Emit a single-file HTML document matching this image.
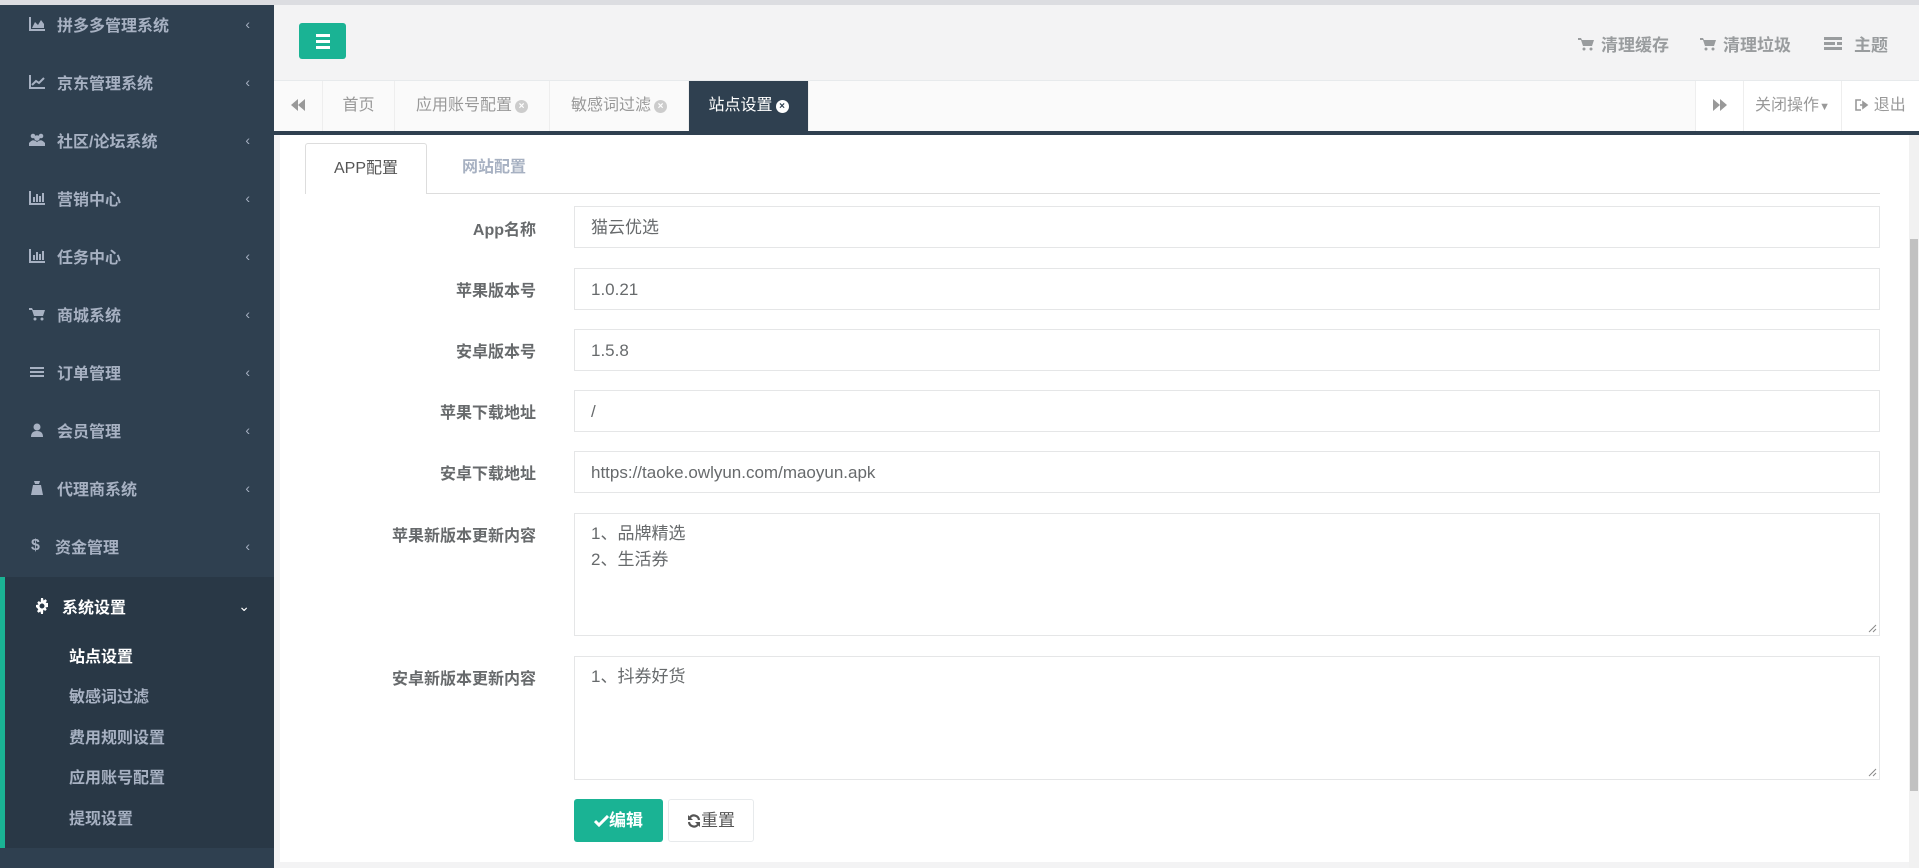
<!DOCTYPE html>
<html><head><meta charset="utf-8"><style>
*{box-sizing:border-box;margin:0;padding:0}
body{width:1919px;height:868px;overflow:hidden;background:#f3f3f4;font-family:"Liberation Sans","Noto Sans CJK SC",sans-serif;position:relative}
.top{position:absolute;left:0;top:0;width:1919px;height:5px;background:#dcdde1}
.side{position:absolute;left:0;top:5px;width:274px;height:863px;background:#2f4050}
.nav{position:absolute;left:0;width:274px;height:58px;color:#a7b1c2;font-size:16px;font-weight:bold;display:flex;align-items:center}
.nav svg{margin-left:29px;margin-right:12px;fill:#a7b1c2}
.nav .ar{position:absolute;right:24px;font-size:14px;font-weight:normal}
.sys{position:absolute;left:0;top:577px;width:274px;height:271px;background:#293846;border-left:5px solid #1ab394}
.sub{position:absolute;color:#a7b1c2;font-size:16px;font-weight:bold}
.hdr{position:absolute;left:274px;top:5px;width:1645px;height:76px;background:#f3f3f4;border-bottom:1px solid #e7eaec}
.ham{position:absolute;left:299px;top:23px;width:47px;height:36px;background:#1ab394;border-radius:3px}
.ham i{position:absolute;left:17px;width:14px;height:3px;background:#fff}
.tr{position:absolute;top:31px;color:#999c9e;font-size:17px;font-weight:bold;display:flex;align-items:center}
.tr svg{fill:#999c9e;margin-right:7px}
.tabs{position:absolute;left:274px;top:81px;width:1645px;background:#fafafa;border-bottom:4px solid #2f4050;height:54px}
.tb{position:absolute;top:0;height:50px;line-height:50px;font-size:16px;color:#999;text-align:center;border-right:1px solid #eee;background:#fafafa}
.x{display:inline-block;width:13px;height:13px;border-radius:50%;background:#ccc;color:#fff;font-size:10px;line-height:13px;vertical-align:1px;margin-left:3px;font-weight:bold}
.panel{position:absolute;left:280px;top:135px;width:1629px;height:727px;background:#fff}
.scr{position:absolute;left:1909px;top:135px;width:10px;height:733px;background:#f1f1f1}
.scr i{position:absolute;left:1px;top:104px;width:8px;height:552px;background:#c1c1c1}
.lbl{position:absolute;right:1383px;font-size:16px;font-weight:bold;color:#676a6c;text-align:right}
.inp{position:absolute;left:574px;width:1306px;border:1px solid #e5e6e7;font-size:17px;color:#676a6c;padding:0 16px}
.grip{position:absolute;right:2px;bottom:2px}
</style></head><body>
<div class="top"></div>
<div class="side">
<div class="nav" style="top:-10px"><svg width="16" height="14" viewBox="0 0 16 14"><path d="M0 0h2v12h14v2H0z M3 11l3-6 3 3 3-5 3 4v4z"/></svg>拼多多管理系统<span class="ar">‹</span></div>
<div class="nav" style="top:48px"><svg width="16" height="14" viewBox="0 0 16 14"><path d="M0 0h2v12h14v2H0z"/><path d="M3 10l4-4 3 2 5-5" stroke="#a7b1c2" stroke-width="2" fill="none"/></svg>京东管理系统<span class="ar">‹</span></div>
<div class="nav" style="top:106px"><svg width="16" height="14" viewBox="0 0 16 14"><circle cx="4" cy="3" r="2.3"/><circle cx="12" cy="3" r="2.3"/><circle cx="8" cy="5" r="2.8"/><path d="M0 10q4-5 8-1 4-4 8 1v3H0z"/></svg>社区/论坛系统<span class="ar">‹</span></div>
<div class="nav" style="top:164px"><svg width="16" height="14" viewBox="0 0 16 14"><path d="M0 0h2v12h14v2H0zM4 6h2v5H4zM7 3h2v8H7zM10 5h2v6h-2zM13 2h2v9h-2z"/></svg>营销中心<span class="ar">‹</span></div>
<div class="nav" style="top:222px"><svg width="16" height="14" viewBox="0 0 16 14"><path d="M0 0h2v12h14v2H0zM4 6h2v5H4zM7 3h2v8H7zM10 5h2v6h-2zM13 2h2v9h-2z"/></svg>任务中心<span class="ar">‹</span></div>
<div class="nav" style="top:280px"><svg width="16" height="14" viewBox="0 0 16 14"><path d="M0 1h3l1 2h12l-2 6H5l-2-6H0z"/><circle cx="6" cy="12" r="1.5"/><circle cx="13" cy="12" r="1.5"/></svg>商城系统<span class="ar">‹</span></div>
<div class="nav" style="top:338px"><svg width="16" height="14" viewBox="0 0 16 14"><path d="M1 2h14v2H1zM1 6h14v2H1zM1 10h14v2H1z"/></svg>订单管理<span class="ar">‹</span></div>
<div class="nav" style="top:396px"><svg width="16" height="14" viewBox="0 0 16 14"><circle cx="8" cy="4" r="3.5"/><path d="M2 14q0-6 6-6t6 6z"/></svg>会员管理<span class="ar">‹</span></div>
<div class="nav" style="top:454px"><svg width="16" height="14" viewBox="0 0 16 14"><path d="M5 0h6l-1 3h-4zM4 4h8l2 10H2z"/></svg>代理商系统<span class="ar">‹</span></div>
<div class="nav" style="top:512px"><span style="margin-left:31px;margin-right:12px;width:12px">$</span>资金管理<span class="ar">‹</span></div>
</div>
<div class="sys">
<div class="nav" style="top:0;left:-5px;color:#fff"><svg width="16" height="16" viewBox="0 0 16 16" style="margin-left:34px;fill:#fff"><path d="M7 0h2l.5 2.5 2-1.2 1.4 1.4-1.2 2L14 5v2h0v2l-2.5.5 1.2 2-1.4 1.4-2-1.2L9 16H7l-.5-2.5-2 1.2-1.4-1.4 1.2-2L2 9V7l2.5-.5-1.2-2 1.4-1.4 2 1.2zM8 5.5A2.5 2.5 0 1 0 8 10.5 2.5 2.5 0 1 0 8 5.5z"/></svg>系统设置<span class="ar" style="right:24px">⌄</span></div>
<div class="sub" style="top:66px;left:64px;color:#fff">站点设置</div>
<div class="sub" style="top:106px;left:64px">敏感词过滤</div>
<div class="sub" style="top:147px;left:64px">费用规则设置</div>
<div class="sub" style="top:187px;left:64px">应用账号配置</div>
<div class="sub" style="top:228px;left:64px">提现设置</div>
</div>
<div class="hdr"></div>
<div class="ham"><i style="top:11px"></i><i style="top:17px"></i><i style="top:23px"></i></div>
<div class="tr" style="left:1578px"><svg width="16" height="14" viewBox="0 0 16 14"><path d="M0 1h3l1 2h12l-2 6H5l-2-6H0z"/><circle cx="6" cy="12" r="1.5"/><circle cx="13" cy="12" r="1.5"/></svg>清理缓存</div>
<div class="tr" style="left:1700px"><svg width="16" height="14" viewBox="0 0 16 14"><path d="M0 1h3l1 2h12l-2 6H5l-2-6H0z"/><circle cx="6" cy="12" r="1.5"/><circle cx="13" cy="12" r="1.5"/></svg>清理垃圾</div>
<div class="tr" style="left:1824px"><svg width="18" height="14" viewBox="0 0 18 14" style="margin-right:12px"><path d="M0 0h18v3H0zM0 5h11v3H0zM13 5h5v3h-5zM0 10h18v3H0z"/></svg>主题</div>
<div class="tabs">
<div class="tb" style="left:0;width:49px"><svg width="14" height="12" viewBox="0 0 14 12" style="vertical-align:-1px;fill:#999"><path d="M7 0v12L0 6zM14 0v12L7 6z"/></svg></div>
<div class="tb" style="left:49px;width:72px">首页</div>
<div class="tb" style="left:121px;width:155px">应用账号配置<span class="x">×</span></div>
<div class="tb" style="left:276px;width:139px">敏感词过滤<span class="x">×</span></div>
<div class="tb" style="left:415px;width:120px;background:#2f4050;color:#fff">站点设置<span class="x" style="background:#fff;color:#2f4050">×</span></div>
<div class="tb" style="left:1421px;width:49px;border-left:1px solid #eee;background:#fff"><svg width="14" height="12" viewBox="0 0 14 12" style="vertical-align:-1px;fill:#999"><path d="M0 0v12l7-6zM7 0v12l7-6z"/></svg></div>
<div class="tb" style="left:1470px;width:98px;background:#fff">关闭操作<span style="font-size:11px">▼</span></div>
<div class="tb" style="left:1568px;width:77px;background:#fff;border-right:none"><svg width="14" height="12" viewBox="0 0 14 12" style="vertical-align:-1px;fill:none;stroke:#999;stroke-width:1.6"><path d="M6 1H1v10h5"/><path d="M5 6h5M8 3l4 3-4 3z" fill="#999"/></svg> 退出</div>
</div>
<div class="panel"></div>
<div class="scr"><i></i></div>
<div style="position:absolute;left:305px;top:193px;width:1575px;height:1px;background:#ddd"></div>
<div style="position:absolute;left:305px;top:143px;width:122px;height:51px;background:#fff;border:1px solid #ddd;border-bottom:none;border-radius:3px 3px 0 0;text-align:center;line-height:50px;font-size:16px;color:#555">APP配置</div>
<div style="position:absolute;left:462px;top:143px;line-height:50px;font-size:16px;color:#a7b1c2;font-weight:bold">网站配置</div>
<div class="lbl" style="top:216px">App名称</div>
<div class="inp" style="top:206px;height:42px;line-height:42px">猫云优选</div>
<div class="lbl" style="top:277px">苹果版本号</div>
<div class="inp" style="top:268px;height:42px;line-height:42px">1.0.21</div>
<div class="lbl" style="top:338px">安卓版本号</div>
<div class="inp" style="top:329px;height:42px;line-height:42px">1.5.8</div>
<div class="lbl" style="top:399px">苹果下载地址</div>
<div class="inp" style="top:390px;height:42px;line-height:42px">/</div>
<div class="lbl" style="top:460px">安卓下载地址</div>
<div class="inp" style="top:451px;height:42px;line-height:42px">https://taoke.owlyun.com/maoyun.apk</div>
<div class="lbl" style="top:522px">苹果新版本更新内容</div>
<div class="inp" style="top:513px;height:123px;padding-top:7px;line-height:26px">1、品牌精选<br>2、生活券<svg class="grip" width="9" height="9" viewBox="0 0 9 9"><path d="M8 1L1 8M8 5L5 8" stroke="#888"/></svg></div>
<div class="lbl" style="top:665px">安卓新版本更新内容</div>
<div class="inp" style="top:656px;height:124px;padding-top:7px;line-height:26px">1、抖券好货<svg class="grip" width="9" height="9" viewBox="0 0 9 9"><path d="M8 1L1 8M8 5L5 8" stroke="#888"/></svg></div>
<div style="position:absolute;left:574px;top:799px;width:89px;height:43px;background:#1ab394;border-radius:3px;color:#fff;font-size:17px;line-height:43px;text-align:center;font-weight:bold"><svg width="15" height="12" viewBox="0 0 15 12" style="vertical-align:-1px"><path d="M1 6l4 4 9-9" stroke="#fff" stroke-width="3" fill="none"/></svg>编辑</div>
<div style="position:absolute;left:668px;top:799px;width:86px;height:43px;background:#fff;border:1px solid #e7eaec;border-radius:3px;color:#555;font-size:17px;line-height:41px;text-align:center"><svg width="14" height="14" viewBox="0 0 14 14" style="vertical-align:-2px"><path d="M12 6A5 5 0 0 0 3 3.5M2 8a5 5 0 0 0 9 2.5" stroke="#555" stroke-width="2.2" fill="none"/><path d="M1 1v5h5zM13 13V8H8z" fill="#555"/></svg>重置</div>
</body></html>
